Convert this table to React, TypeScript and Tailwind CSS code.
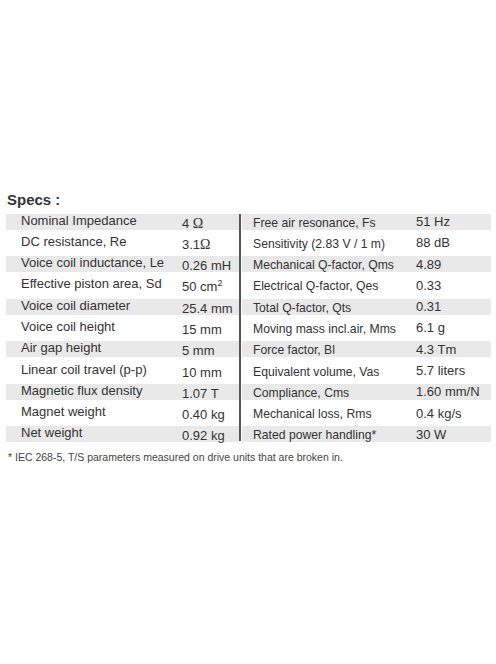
import React from "react";

type Row = { label: React.ReactNode; value: React.ReactNode };

const left: Row[] = [
  { label: "Nominal Impedance", value: <>4 <span style={{ fontFamily: '"Liberation Serif", serif' }} className="text-[14px]">Ω</span></> },
  { label: "DC resistance, Re", value: <>3.1<span style={{ fontFamily: '"Liberation Serif", serif' }} className="text-[14px]">Ω</span></> },
  { label: "Voice coil inductance, Le", value: "0.26 mH" },
  { label: "Effective piston area, Sd", value: <>50 cm<sup className="text-[9px] relative -top-[5px]">2</sup></> },
  { label: "Voice coil diameter", value: "25.4 mm" },
  { label: "Voice coil height", value: "15 mm" },
  { label: "Air gap height", value: "5 mm" },
  { label: "Linear coil travel (p-p)", value: "10 mm" },
  { label: "Magnetic flux density", value: "1.07 T" },
  { label: "Magnet weight", value: "0.40 kg" },
  { label: "Net weight", value: "0.92 kg" },
];

const right: Row[] = [
  { label: "Free air resonance, Fs", value: "51 Hz" },
  { label: "Sensitivity (2.83 V / 1 m)", value: "88 dB" },
  { label: "Mechanical Q-factor, Qms", value: "4.89" },
  { label: "Electrical Q-factor, Qes", value: "0.33" },
  { label: "Total Q-factor, Qts", value: "0.31" },
  { label: "Moving mass incl.air, Mms", value: "6.1 g" },
  { label: "Force factor, Bl", value: "4.3 Tm" },
  { label: "Equivalent volume, Vas", value: "5.7 liters" },
  { label: "Compliance, Cms", value: "1.60 mm/N" },
  { label: "Mechanical loss, Rms", value: "0.4 kg/s" },
  { label: "Rated power handling*", value: "30 W" },
];

export default function App() {
  return (
    <div
      className="w-[496px] h-[664px] bg-white text-[#333]"
      style={{ fontFamily: '"Liberation Sans", Arial, sans-serif' }}
    >
      <div className="pt-[191px] pl-[7px] text-[15px] leading-[18px] font-bold text-[#353535]">Specs :</div>
      <div className="mt-[4.5px] flex">
        <div className="ml-[6px] w-[233px] flex flex-col">
          {left.map((r, i) => (
            <div key={i} className="h-[21.3px]">
              <div className={`h-[16px] flex ${i % 2 === 0 ? "bg-[#e9e9e9]" : ""}`}>
                <div className="pl-[15px] w-[176px] text-[13px] leading-[13px] whitespace-nowrap">{r.label}</div>
                <div className="mt-[3px] text-[13px] leading-[13px] whitespace-nowrap">{r.value}</div>
              </div>
            </div>
          ))}
        </div>
        <div className="w-[2px] h-[227px] bg-[#555] self-start" />
        <div className="ml-[1px] w-[249px] flex flex-col">
          {right.map((r, i) => (
            <div key={i} className="h-[21.3px]">
              <div className={`h-[16px] flex ${i % 2 === 0 ? "bg-[#e9e9e9]" : ""}`}>
                <div className="pl-[11px] w-[174px] mt-[3px] text-[12.2px] leading-[13px] whitespace-nowrap">{r.label}</div>
                <div className="mt-[1.5px] text-[13px] leading-[13px] whitespace-nowrap">{r.value}</div>
              </div>
            </div>
          ))}
        </div>
      </div>
      <div className="mt-[3.5px] pl-[8px] text-[10.5px] leading-[12px] text-[#444] whitespace-nowrap">
        * IEC 268-5, T/S parameters measured on drive units that are broken in.
      </div>
    </div>
  );
}
